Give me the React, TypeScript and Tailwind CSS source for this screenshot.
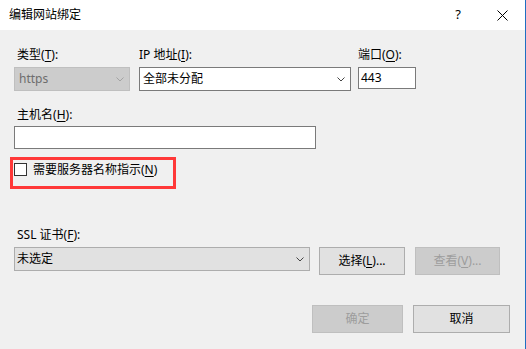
const font = { fontFamily: '"Noto Sans", "Noto Sans CJK SC", sans-serif' };

function Chevron({ color = "#444" }: { color?: string }) {
  return (
    <svg width="8" height="5" viewBox="0 0 8 5" fill="none">
      <path d="M0.5 0.5 L4 4 L7.5 0.5" stroke={color} strokeWidth="1" />
    </svg>
  );
}

function Label({ text, k, rest = ":" }: { text: string; k: string; rest?: string }) {
  return (
    <div className="h-4 pl-[3px] text-[12px] leading-4 text-black whitespace-nowrap">
      {text}(<span className="underline underline-offset-2">{k}</span>){rest}
    </div>
  );
}

function Button({
  children,
  disabled,
  className,
}: {
  children: React.ReactNode;
  disabled?: boolean;
  className?: string;
}) {
  return (
    <div
      className={
        "flex h-[28px] items-center justify-center border text-[12px] leading-4 " +
        (disabled
          ? "border-[#bfbfbf] bg-[#cccccc] text-[#9d9d9d] "
          : "border-[#adadad] bg-[#e1e1e1] text-black ") +
        (className ?? "")
      }
    >
      {children}
    </div>
  );
}

export default function App() {
  return (
    <div
      className="flex h-[349px] w-[526px] flex-col border-r border-[#1f6fc2] bg-[#f0f0f0]"
      style={font}
    >
      {/* title bar */}
      <div className="flex h-[30px] items-center bg-white pl-[9px] text-[12px] text-black">
        <span>编辑网站绑定</span>
        <span className="ml-auto mr-[36px] text-[13px]">?</span>
        <svg width="11" height="11" viewBox="0 0 11 11" className="mr-[17px]">
          <path d="M0.5 0.5 L10.5 10.5 M10.5 0.5 L0.5 10.5" stroke="#000" strokeWidth="1" />
        </svg>
      </div>

      {/* body */}
      <div className="flex flex-1 flex-col pl-[14px] pt-[17px]">
        <div className="flex">
          <div className="flex w-[116px] flex-col">
            <Label text="类型" k="T" />
            <div className="mt-[4px] flex h-[24px] items-center justify-between border border-[#bfbfbf] bg-[#cccccc] pl-[4px] pr-[5px] text-[12px] text-[#6d6d6d]">
              <span>https</span>
              <Chevron color="#a3a3a3" />
            </div>
          </div>
          <div className="ml-[9px] flex w-[212px] flex-col">
            <div className="h-4 text-[12px] leading-4 whitespace-nowrap">
              IP 地址(<span className="underline underline-offset-2">I</span>):
            </div>
            <div className="mt-[4px] flex h-[24px] items-center justify-between border border-[#7a7a7a] bg-white pl-[3px] pr-[5px] text-[12px] text-black">
              <span>全部未分配</span>
              <Chevron />
            </div>
          </div>
          <div className="ml-[7px] flex w-[58px] flex-col">
            <div className="h-4 text-[12px] leading-4 whitespace-nowrap">
              端口(<span className="underline underline-offset-2">O</span>):
            </div>
            <div className="mt-[4px] flex h-[22px] items-center border border-[#7a7a7a] bg-white pl-[2px] text-[12px] text-black">
              443
            </div>
          </div>
        </div>

        <div className="mt-[16px]">
          <Label text="主机名" k="H" />
        </div>
        <div className="mt-[3px] h-[23px] w-[302px] border border-[#7a7a7a] bg-white" />

        <div className="-ml-[4px] mt-[8px] h-[32px] w-[166px] border-[3px] border-[#ff3838]">
          <div className="ml-[1px] mt-[3px] flex h-[13px] items-center">
            <div className="h-[13px] w-[13px] border border-[#333333] bg-white" />
            <span className="ml-[6px] text-[12px] leading-4 text-black whitespace-nowrap">
              需要服务器名称指示(<span className="underline underline-offset-2">N</span>)
            </span>
          </div>
        </div>

        <div className="mt-[38px]">
          <div className="h-4 pl-[3px] text-[12px] leading-4 whitespace-nowrap">
            SSL 证书(<span className="underline underline-offset-2">F</span>):
          </div>
        </div>
        <div className="mt-[4px] flex items-start">
          <div className="flex h-[24px] w-[296px] items-center justify-between border border-[#adadad] bg-[#e1e1e1] pl-[2px] pr-[5px] text-[12px] text-black">
            <span>未选定</span>
            <Chevron />
          </div>
          <Button className="ml-[9px] w-[86px]">
            选择(<span className="underline underline-offset-2">L</span>)...
          </Button>
          <Button disabled className="ml-[10px] w-[85px]">
            查看(<span className="underline underline-offset-2">V</span>)...
          </Button>
        </div>

        <div className="mt-[30px] flex justify-end pr-[15px]">
          <Button disabled className="w-[91px]">
            确定
          </Button>
          <Button className="ml-[10px] w-[97px]">取消</Button>
        </div>
      </div>
    </div>
  );
}
